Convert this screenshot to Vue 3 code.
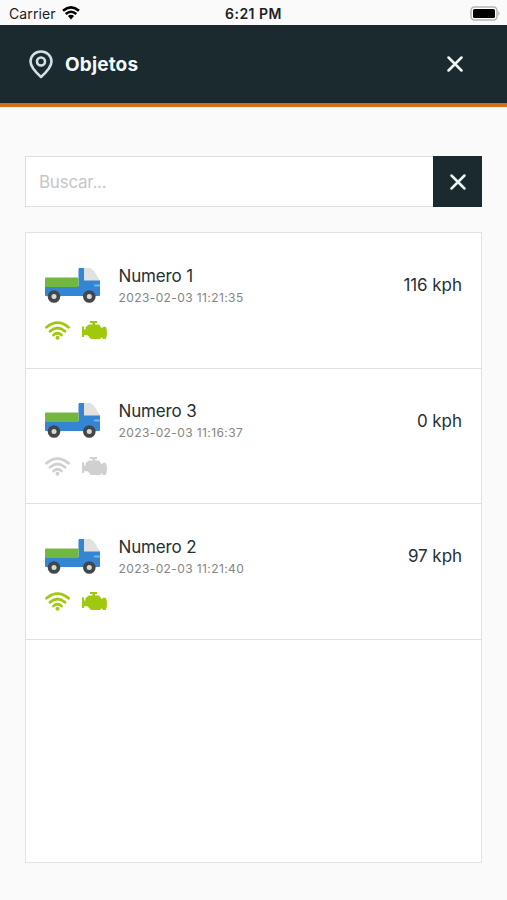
<script setup>
const items = [
  { name: 'Numero 1', time: '2023-02-03 11:21:35', speed: '116 kph', online: true },
  { name: 'Numero 3', time: '2023-02-03 11:16:37', speed: '0 kph', online: false },
  { name: 'Numero 2', time: '2023-02-03 11:21:40', speed: '97 kph', online: true },
]
</script>

<template>
  <div class="screen">
    <div class="status">
      <div class="carrier">
        <span class="carrier-name">Carrier</span>
        <svg class="status-wifi" viewBox="0 0 18 14">
          <path d="M1 4.8Q9-2.1 17 4.8" fill="none" stroke="#000" stroke-width="2.6" />
          <path d="M3.7 8Q9 3.5 14.3 8" fill="none" stroke="#000" stroke-width="2.4" />
          <path d="M5.9 10.1Q9 7.6 12.1 10.1L9 13.5Z" fill="#000" />
        </svg>
      </div>
      <span class="clock">6:21 PM</span>
      <svg class="battery" viewBox="0 0 31 15">
        <rect x="1" y="1" width="26" height="13" rx="3.5" fill="#fff" stroke="#b4b4b4" stroke-width="1.5" />
        <rect x="3" y="3" width="22" height="9" rx="1.5" fill="#000" />
        <path d="M28.3 5Q31 7.5 28.3 10Z" fill="#b4b4b4" />
      </svg>
    </div>

    <header class="header">
      <svg class="pin" viewBox="0 0 24 29">
        <path d="M12 27Q1.5 17.6 1.5 11.5A10.5 10 0 0 1 22.5 11.5Q22.5 17.6 12 27Z" fill="none" stroke="#d5e0e2" stroke-width="2.6" stroke-linejoin="round" />
        <circle cx="12" cy="11.5" r="4" fill="none" stroke="#d5e0e2" stroke-width="2.6" />
      </svg>
      <h1 class="title">Objetos</h1>
      <svg class="close" viewBox="0 0 16 16">
        <path d="M1.5 1.5L14.5 14.5M14.5 1.5L1.5 14.5" />
      </svg>
    </header>

    <main class="content">
      <div class="search">
        <input class="search-input" placeholder="Buscar..." />
        <button class="search-clear" aria-label="Borrar">
          <svg class="close" viewBox="0 0 16 16">
            <path d="M1.5 1.5L14.5 14.5M14.5 1.5L1.5 14.5" />
          </svg>
        </button>
      </div>

      <div class="list">
        <div v-for="item in items" :key="item.name" class="row">
          <div class="row-main">
            <svg class="truck" viewBox="0 0 56 36">
              <path d="M33.5 1Q33.5 0 34.5 0H39V12H55V27Q55 28 54 28H1Q0 28 0 27V18H33.5Z" fill="#3486d5" />
              <rect y="9.5" width="33.5" height="9.5" rx="1" fill="#72b840" />
              <path d="M39 0H44Q48 .5 51 6L55 12.5H39Z" fill="#e1e1e2" />
              <path d="M49 16.5H55V18.5H50Q49 18.5 49 16.5Z" fill="#75b8ed" />
              <circle cx="9" cy="28.5" r="6.3" fill="#444749" />
              <circle cx="9" cy="28.5" r="2.5" fill="#d6d8d9" />
              <circle cx="44.3" cy="28.5" r="6.3" fill="#444749" />
              <circle cx="44.3" cy="28.5" r="2.5" fill="#d6d8d9" />
            </svg>
            <div class="details">
              <div class="name">{{ item.name }}</div>
              <div class="time">{{ item.time }}</div>
            </div>
            <div class="speed">{{ item.speed }}</div>
          </div>
          <div class="indicators" :class="{ online: item.online }">
            <svg class="indicator" viewBox="0 0 25 19">
              <g fill="none" stroke="currentColor" stroke-width="2.8" stroke-linecap="round">
                <path d="M1.5 6.3Q12.5-3 23.5 6.3" />
                <path d="M5 10.3Q12.5 3.7 20 10.3" />
                <path d="M8.5 14Q12.5 10.5 16.5 14" />
              </g>
              <circle cx="12.5" cy="16.7" r="2" fill="currentColor" />
            </svg>
            <svg class="indicator" viewBox="0 0 25 19">
              <path fill="currentColor" d="M8 0H15V2H13.2V3.5H17L19.5 7H20.5V5.8H23.8Q25 8.5 25 12T23.8 18H20.5V16.5H19.5L18 18H9L5.5 14.3H2V16H0V5.5H2V8.5H3.5V6L7 3.500H10.500V2H8Z" />
            </svg>
          </div>
        </div>
      </div>
    </main>
  </div>
</template>

<style>
body {
  background: #fafafa;
}
</style>

<style scoped>
.screen {
  box-sizing: border-box;
  width: 507px;
  height: 900px;
  display: flex;
  flex-direction: column;
  background: #fafafa;
  color: #263033;
  font-family: Inter, sans-serif;
}
.status {
  height: 25px;
  box-sizing: border-box;
  padding: 1px 6px 0 9px;
  display: grid;
  grid-template-columns: 1fr auto 1fr;
  align-items: center;
  color: #202020;
  font-size: 14px;
}
.carrier {
  display: flex;
  align-items: center;
  gap: 6px;
}
.carrier-name {
  letter-spacing: 0.1px;
}
.status-wifi {
  width: 18px;
  height: 14px;
}
.clock {
  margin-right: 3px;
  font-weight: 600;
  letter-spacing: 0.5px;
}
.battery {
  width: 31px;
  height: 15px;
  justify-self: end;
}
.header {
  box-sizing: border-box;
  height: 82px;
  padding: 0 44px 0 29px;
  border-bottom: 4px solid #d96b1b;
  display: flex;
  align-items: center;
  background: #1a2a2f;
}
.pin {
  width: 24px;
  height: 29px;
}
.title {
  margin: 0 auto 0 12px;
  color: #f4fafb;
  font-size: 19px;
  font-weight: 700;
  letter-spacing: 0.15px;
}
.close {
  width: 16px;
  height: 16px;
  fill: none;
  stroke: #eef5f5;
  stroke-width: 2.5;
  stroke-linecap: round;
}
.content {
  flex: 1;
  padding: 49px 25px 37px;
  display: flex;
  flex-direction: column;
  gap: 25px;
}
.search {
  height: 51px;
  display: flex;
}
.search-input {
  flex: 1;
  min-width: 0;
  box-sizing: border-box;
  padding: 0 13px;
  border: 1px solid #e0e0e0;
  border-right: 0;
  border-radius: 0;
  background: #fff;
  font: 17px Inter, sans-serif;
  letter-spacing: -0.25px;
}
.search-input::placeholder {
  color: #c7c7c7;
  opacity: 1;
}
.search-clear {
  width: 49px;
  padding: 0;
  border: 0;
  display: grid;
  place-items: center;
  background: #1a2a2f;
}
.list {
  flex: 1;
  border: 1px solid #e2e2e2;
  background: #fff;
}
.row {
  box-sizing: border-box;
  height: 135.5px;
  padding: 31px 19px 0;
  border-bottom: 1px solid #e0e0e0;
}
.row-main {
  height: 43px;
  display: flex;
  align-items: center;
}
.truck {
  width: 56px;
  height: 36px;
}
.details {
  margin: 0 auto 0 17.5px;
  padding-top: 1px;
}
.name {
  font-size: 17px;
  line-height: 22px;
  letter-spacing: -0.15px;
}
.time {
  color: #858585;
  font-size: 12px;
  line-height: 21px;
  letter-spacing: 0.4px;
}
.speed {
  padding-bottom: 1px;
  font-size: 17px;
  letter-spacing: -0.05px;
}
.indicators {
  margin-top: 14px;
  display: flex;
  gap: 12px;
  color: #d0d0d0;
}
.indicators.online {
  color: #a0c80e;
}
.indicator {
  width: 25px;
  height: 19px;
}
</style>
